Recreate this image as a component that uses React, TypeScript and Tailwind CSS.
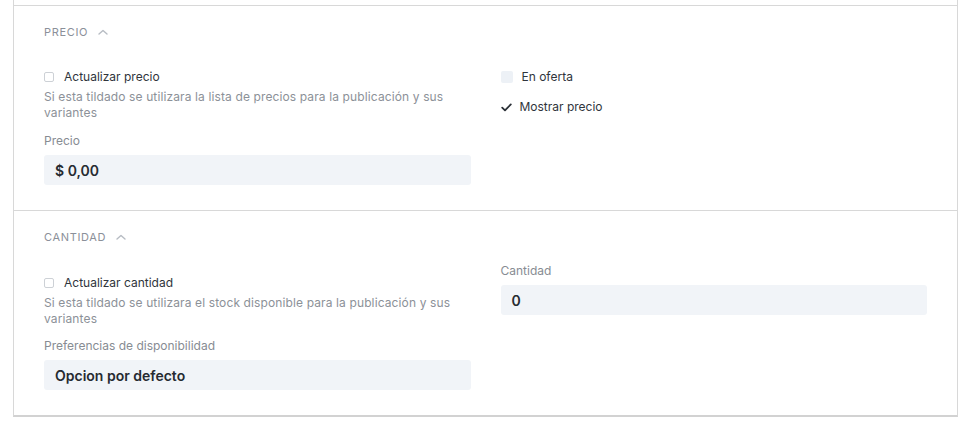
import type { ReactNode } from "react";

function Chevron() {
  return (
    <svg width="10" height="6" viewBox="0 0 10 6" fill="none" className="ml-[10px]">
      <path d="M1 5L5 1.5L9 5" stroke="#b7bcc3" strokeWidth="1.4" strokeLinecap="round" strokeLinejoin="round" />
    </svg>
  );
}

function SectionTitle({ children }: { children: ReactNode }) {
  return (
    <div className="flex items-center h-[14px] text-[11px] leading-[14px] uppercase tracking-[0.06em] text-[#8b9099]">
      {children}
      <Chevron />
    </div>
  );
}

function CheckRow({ label, variant }: { label: string; variant: "empty" | "filled" | "checked" }) {
  return (
    <div className="flex items-center h-[16px] text-[12px] leading-[16px] text-[#30353c]">
      {variant === "empty" && (
        <span className="w-[10px] h-[10px] rounded-[2px] border border-[#cdd1d6] bg-white mr-[10px]" />
      )}
      {variant === "filled" && <span className="w-[12px] h-[12px] rounded-[2px] bg-[#edf1f6] mr-[9px]" />}
      {variant === "checked" && (
        <svg width="11" height="9" viewBox="0 0 11 9" fill="none" className="mr-[8px]">
          <path d="M1.2 4.6L4 7.4L9.8 1.4" stroke="#2b3037" strokeWidth="1.8" strokeLinecap="round" strokeLinejoin="round" />
        </svg>
      )}
      <span>{label}</span>
    </div>
  );
}

function Hint({ children }: { children: ReactNode }) {
  return (
    <p className="mt-[4px] text-[12px] leading-[16px] tracking-[0.01em] text-[#8c9198] pr-[20px]">{children}</p>
  );
}

function Field({ label, value, className = "" }: { label: string; value: string; className?: string }) {
  return (
    <div className={className}>
      <div className="text-[12px] leading-[16px] text-[#878c93]">{label}</div>
      <div className="mt-[6px] h-[30px] rounded-[3px] bg-[#f1f4f8] px-[11px] flex items-center text-[14px] font-semibold text-[#262b31]">
        {value}
      </div>
    </div>
  );
}

export default function App() {
  return (
    <div className="w-[968px] h-[426px] bg-white" style={{ fontFamily: "Inter, 'Noto Sans', sans-serif" }}>
      <div className="ml-[13px] w-[945px] border-x border-b-2 border-x-[#d8d8d8] border-b-[#d2d2d2]">
        <div className="h-[5px]" />
        <section className="border-t border-[#d8d8d8] pt-[19px] pb-[25px] px-[30px]">
          <SectionTitle>Precio</SectionTitle>
          <div className="mt-[19px] grid grid-cols-2 gap-x-[30px]">
            <div>
              <div className="mt-[11px]">
                <CheckRow label="Actualizar precio" variant="empty" />
              </div>
              <Hint>Si esta tildado se utilizara la lista de precios para la publicación y sus variantes</Hint>
              <Field label="Precio" value="$ 0,00" className="mt-[12px]" />
            </div>
            <div>
              <div className="mt-[11px]">
                <CheckRow label="En oferta" variant="filled" />
              </div>
              <div className="mt-[14px]">
                <CheckRow label="Mostrar precio" variant="checked" />
              </div>
            </div>
          </div>
        </section>
        <section className="border-t border-[#d8d8d8] pt-[19px] pb-[25px] px-[30px]">
          <SectionTitle>Cantidad</SectionTitle>
          <div className="mt-[19px] grid grid-cols-2 gap-x-[30px]">
            <div>
              <div className="mt-[12px]">
                <CheckRow label="Actualizar cantidad" variant="empty" />
              </div>
              <Hint>Si esta tildado se utilizara el stock disponible para la publicación y sus variantes</Hint>
              <Field label="Preferencias de disponibilidad" value="Opcion por defecto" className="mt-[11px]" />
            </div>
            <div>
              <Field label="Cantidad" value="0" />
            </div>
          </div>
        </section>
      </div>
    </div>
  );
}
